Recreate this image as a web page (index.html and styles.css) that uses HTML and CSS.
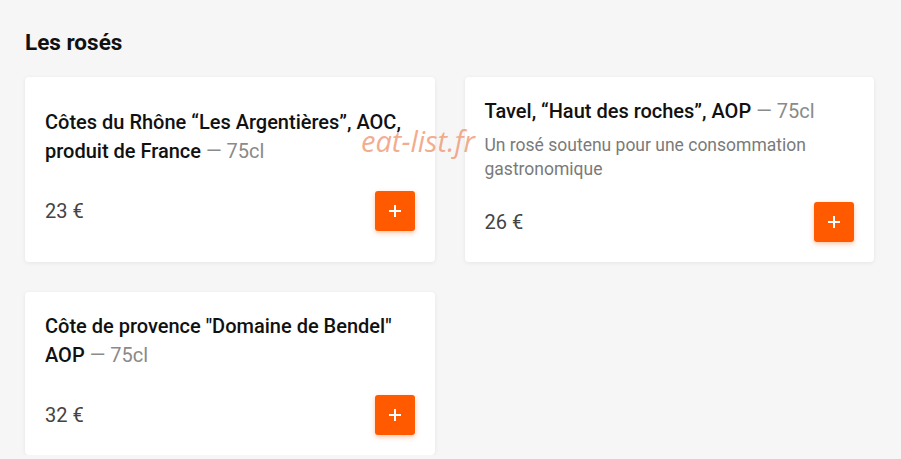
FILE: index.html
```html
<!DOCTYPE html>
<html lang="fr">
<head>
    <meta charset="UTF-8">
    <meta name="viewport" content="width=device-width, initial-scale=1.0">
    <title>Les rosés</title>
    <link rel="stylesheet" href="styles.css">
</head>
<body>
    <main class="menu">
        <h2 class="sectionTitle">Les rosés</h2>
        <div class="productGrid">
            <div class="product">
                <div class="productName">Côtes du Rhône “Les Argentières”, AOC, produit de France <span class="volume">— 75cl</span></div>
                <div class="productFooter">
                    <span class="price">23 €</span>
                    <button class="addButton" aria-label="Ajouter">
                        <svg width="14" height="14" viewBox="0 0 14 14"><path d="M7 1v12M1 7h12" stroke="#fff" stroke-width="2"/></svg>
                    </button>
                </div>
            </div>
            <div class="product">
                <div class="productName">Tavel, “Haut des roches”, AOP <span class="volume">— 75cl</span></div>
                <div class="productDesc">Un rosé soutenu pour une consommation gastronomique</div>
                <div class="productFooter">
                    <span class="price">26 €</span>
                    <button class="addButton" aria-label="Ajouter">
                        <svg width="14" height="14" viewBox="0 0 14 14"><path d="M7 1v12M1 7h12" stroke="#fff" stroke-width="2"/></svg>
                    </button>
                </div>
            </div>
            <div class="product">
                <div class="productName">Côte de provence "Domaine de Bendel" AOP <span class="volume">— 75cl</span></div>
                <div class="productFooter">
                    <span class="price">32 €</span>
                    <button class="addButton" aria-label="Ajouter">
                        <svg width="14" height="14" viewBox="0 0 14 14"><path d="M7 1v12M1 7h12" stroke="#fff" stroke-width="2"/></svg>
                    </button>
                </div>
            </div>
        </div>
        <div class="watermark">eat-list.fr</div>
    </main>
</body>
</html>
```

FILE: styles.css
```css
* {
    margin: 0;
    padding: 0;
    box-sizing: border-box;
}
body {
    background-color: #f6f6f6;
    font-family: Roboto, "Noto Sans", sans-serif;
    color: #111;
}
.menu {
    position: relative;
    padding: 29px 27px 0 25px;
}
.sectionTitle {
    font-size: 22.5px;
    font-weight: 700;
    line-height: 26px;
    margin-bottom: 22px;
}
.productGrid {
    display: grid;
    grid-template-columns: 1fr 1fr;
    gap: 30px;
}
.product {
    display: flex;
    flex-direction: column;
    justify-content: center;
    padding: 20px;
    background-color: #fff;
    border-radius: 4px;
    box-shadow: 0 1px 4px rgba(0, 0, 0, 0.07);
}
.productName {
    font-size: 20px;
    font-weight: 500;
    line-height: 29px;
}
.volume {
    font-weight: 400;
    color: #8a8a8a;
}
.productDesc {
    margin-top: 7px;
    font-size: 17.5px;
    line-height: 24px;
    color: #7a7a7a;
}
.productFooter {
    display: flex;
    justify-content: space-between;
    align-items: center;
    margin-top: 25px;
}
.productDesc + .productFooter {
    margin-top: 21px;
}
.price {
    font-size: 20px;
    color: #444;
}
.addButton {
    display: flex;
    justify-content: center;
    align-items: center;
    width: 40px;
    height: 40px;
    border: none;
    border-radius: 3px;
    background-color: #ff5a00;
    box-shadow: 0 2px 5px rgba(255, 90, 0, 0.35);
}
.watermark {
    position: absolute;
    left: 361px;
    top: 121px;
    font-family: "Open Sans", sans-serif;
    font-style: italic;
    font-size: 29px;
    color: rgba(238, 145, 105, 0.75);
}
```
